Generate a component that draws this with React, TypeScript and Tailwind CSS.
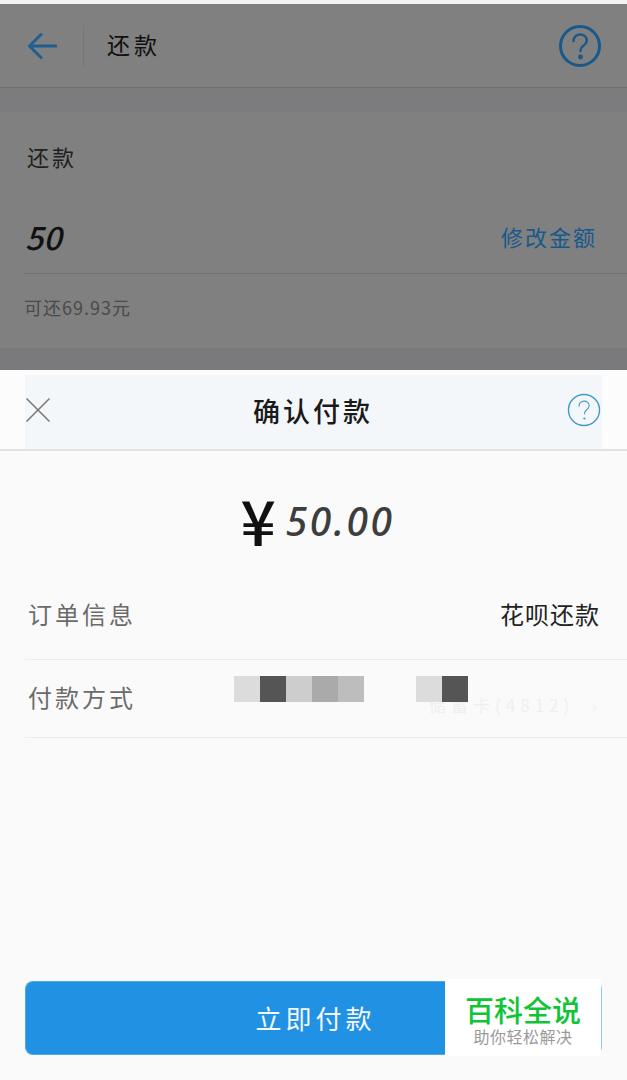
import { X } from "lucide-react";

const cjk = "font-['Noto_Sans_CJK_SC','Liberation_Sans',sans-serif]";

function HelpIcon({ size, stroke, color }: { size: number; stroke: number; color: string }) {
  return (
    <svg width={size} height={size} viewBox="0 0 44 44" fill="none">
      <circle cx="22" cy="22" r={21 - stroke / 2} stroke={color} strokeWidth={stroke} />
      <path
        d="M15.5 17c0-4 3-6.5 6.7-6.5s6.5 2.400 6.500 5.800c0 2.500-1.300 3.900-3.200 5.300-1.900 1.400-3 2.600-3 5.400"
        stroke={color}
        strokeWidth={stroke * 0.8}
        strokeLinecap="round"
      />
      <circle cx="22.500" cy="33" r={stroke * 0.8} fill={color} />
    </svg>
  );
}

function BackgroundPage() {
  return (
    <div className="h-[370px] shrink-0 flex flex-col bg-[#808080]">
      <div className="h-1 bg-[#f2f2f2]" />
      <header className="h-[84px] flex items-center justify-between pl-[27px] pr-[26px] border-b border-[#6f6f6f]">
        <div className="flex items-center">
          <svg width="30" height="30" viewBox="0 0 30 30" fill="none">
            <path
              d="M29 15H3M14 3.500 2.500 15 14 26.500"
              stroke="#1f5f92"
              strokeWidth="3"
              strokeLinecap="round"
              strokeLinejoin="round"
            />
          </svg>
          <div className="w-px h-[42px] bg-[#767676] ml-[26px]" />
          <span className="ml-[23px] -mt-[3px] text-[23px] leading-none tracking-[4px] text-[#101010]">还款</span>
        </div>
        <div className="-mr-px">
          <HelpIcon size={44} stroke={3} color="#17598c" />
        </div>
      </header>
      <div className="h-6 bg-[#7c7c7e]" />
      <section className="h-[236px] bg-[#808080] pl-6 flex flex-col">
        <div className="pl-[3px] pt-[32px] text-[22px] leading-6 tracking-[3px] text-[#202020]">还款</div>
        <div className="mt-[39px] h-[67px] pb-[9px] pr-[30px] flex items-center justify-between border-b border-[#737373]">
          <span className="pl-[1px] text-[32px] leading-none font-medium italic text-[#111111]">50</span>
          <span className="text-[22px] leading-none tracking-[2px] text-[#17598c]">修改金额</span>
        </div>
        <div className="pt-[23px] text-[18px] leading-5 tracking-[1px] text-[#4a4a4a]">可还69.93元</div>
      </section>
      <div className="h-[22px] bg-[#7a7a7c]" />
    </div>
  );
}

function PaymentRow({ label, value, mosaic }: { label: string; value?: string; mosaic?: boolean }) {
  return (
    <div className={`relative h-[78px] flex items-center justify-between pr-[27px] border-b border-[#ececec] ${value ? "pb-[13px]" : "pb-[4px]"}`}>
      <span className="pl-[3px] text-[24px] leading-none tracking-[3px] text-[#6b6b6b]">{label}</span>
      {value && <span className="text-[24px] leading-none tracking-[1px] text-[#222222]">{value}</span>}
      {mosaic && (
        <>
          <span className="text-[17px] leading-none tracking-[5px] text-[#efefef] mt-4 -mr-[2px]">储蓄卡(4812)&nbsp;&nbsp;›</span>
          <div className="absolute left-[209px] top-[16px] flex">
            <i className="w-[26px] h-[26px] bg-[#dcdcdc]" />
            <i className="w-[26px] h-[26px] bg-[#555555]" />
            <i className="w-[26px] h-[26px] bg-[#cdcdcd]" />
            <i className="w-[26px] h-[26px] bg-[#aaaaaa]" />
            <i className="w-[26px] h-[26px] bg-[#bdbdbd]" />
          </div>
          <div className="absolute left-[391px] top-[16px] flex">
            <i className="w-[26px] h-[26px] bg-[#dcdcdc]" />
            <i className="w-[26px] h-[26px] bg-[#555555]" />
          </div>
        </>
      )}
    </div>
  );
}

export default function App() {
  return (
    <div className={`w-[627px] h-[1080px] overflow-hidden flex flex-col bg-[#fafafa] ${cjk}`}>
      <BackgroundPage />
      <div className="flex-1 flex flex-col bg-[#fafafa]">
        <div className="h-[81px] shrink-0 bg-[#fcfcfc] border-b-2 border-[#dfe3e6] px-[25px] pt-[5px]">
          <div className="h-[74px] pb-[4px] bg-[#f4f7fa] flex items-center justify-between relative pr-[1px]">
            <X size={44} strokeWidth={0.9} className="text-[#7b7b7b] -ml-[9px]" />
            <span className="absolute left-[228px] text-[27px] leading-none tracking-[3px] font-medium text-[#1a1a1a]">确认付款</span>
            <HelpIcon size={34} stroke={1.800} color="#3f98c9" />
          </div>
        </div>
        <div className="h-[131px] shrink-0 flex items-start justify-center gap-[10px] pl-[8px] pt-[38px]">
          <span className="text-[62px] leading-[60px] text-[#111111] font-medium">¥</span>
          <span className="pt-[9px] text-[39px] leading-[46px] font-medium italic tracking-[2.5px] text-[#3d3d3d] font-['Noto_Sans',sans-serif]">50.00</span>
        </div>
        <div className="pl-[25px]">
          <PaymentRow label="订单信息" value="花呗还款" />
          <PaymentRow label="付款方式" mosaic />
        </div>
        <div className="flex-1 px-[25px] flex flex-col justify-end pb-[25px]">
          <div className="relative h-[74px] rounded-lg bg-[#2191e4] border border-[#53a8e0] border-r-[#8ecbef] flex items-center justify-center pl-[4px]">
            <span className="text-[26px] leading-none tracking-[4px] text-[#f4f9fd]">立即付款</span>
            <div className="absolute right-0 -top-[3px] w-[156px] h-[77px] bg-white flex flex-col items-center pt-[15px]">
              <span className="text-[29px] leading-[30px] font-medium text-[#0fc535]">百科全说</span>
              <span className="mt-[3px] text-[16px] leading-[18px] tracking-[0.5px] text-[#9a9a9a]">助你轻松解决</span>
            </div>
          </div>
        </div>
      </div>
    </div>
  );
}
